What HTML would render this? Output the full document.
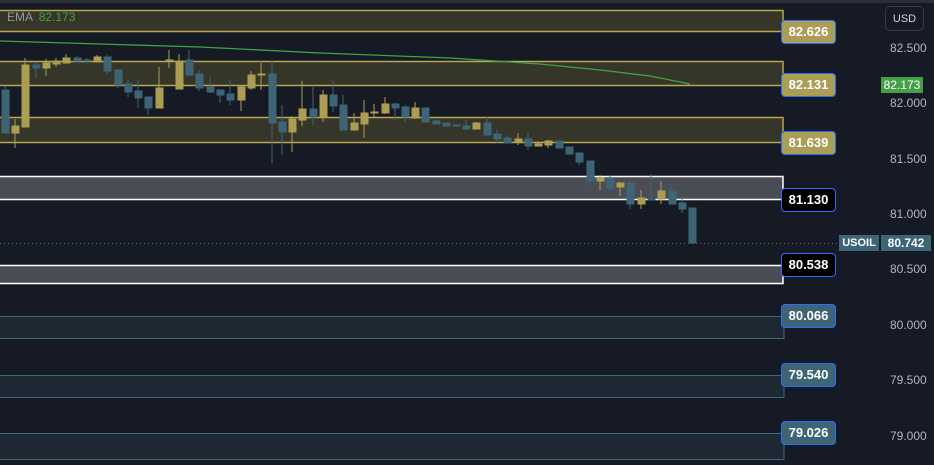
<!DOCTYPE html>
<html><head><style>
html,body{margin:0;padding:0;background:#161a25;width:934px;height:465px;overflow:hidden;font-family:"Liberation Sans",sans-serif}
.lb{position:absolute;left:781px;width:53px;height:22px;border:1.5px solid #2f6bff;border-radius:4px;color:#fff;font-size:13px;font-weight:bold;text-align:center;line-height:22px}
.ax{position:absolute;left:890px;color:#b2b5be;font-size:12px}
</style></head><body>
<div style="position:absolute;left:0;top:0;width:934px;height:3px;background:#2a2e39"></div>
<svg width="934" height="465" style="position:absolute;left:0;top:0">
<g fill="#353529" stroke="#b9a651" stroke-width="1.5">
<rect x="-2" y="10.5" width="785" height="21"/>
<rect x="-2" y="61.5" width="785" height="24"/>
<rect x="-2" y="117.5" width="785" height="25"/>
</g>
<g fill="#4a4d56" stroke="#fff" stroke-width="1.5">
<rect x="-2" y="176.5" width="785" height="23"/>
<rect x="-2" y="265.5" width="785" height="18"/>
</g>
<g fill="#1d2833" stroke="#3d6b7b" stroke-width="1">
<rect x="-2" y="316.5" width="786" height="22"/>
<rect x="-2" y="375.5" width="786" height="22"/>
<rect x="-2" y="433.5" width="786" height="26"/>
</g>
<polyline fill="none" stroke="#43a047" stroke-width="1.3" points="0,41 100,44 200,47 320,53 450,58 540,64 600,70 650,76 690,84"/>
<line x1="0" y1="243.5" x2="840" y2="243.5" stroke="#52707e" stroke-dasharray="1,3"/>
<g stroke-width="1">
<!-- x, wickTop, wickBot, bodyTop, bodyBot, color -->
<g stroke="#3e6576" fill="#3e6576">
<line x1="5" y1="86" x2="5" y2="133"/><rect x="2" y="90" width="7" height="43"/>
<line x1="36" y1="62" x2="36" y2="78"/><rect x="33" y="65" width="7" height="3"/>
<line x1="77" y1="56" x2="77" y2="62"/><rect x="74" y="58" width="7" height="3"/>
<line x1="87" y1="58" x2="87" y2="63"/><rect x="84" y="60" width="7" height="1"/>
<line x1="107" y1="55" x2="107" y2="74"/><rect x="104" y="57" width="7" height="14"/>
<line x1="118" y1="70" x2="118" y2="88"/><rect x="115" y="70" width="7" height="15"/>
<line x1="128" y1="79" x2="128" y2="97"/><rect x="125" y="84" width="7" height="8"/>
<line x1="138" y1="80" x2="138" y2="108"/><rect x="135" y="91" width="7" height="7"/>
<line x1="148" y1="97" x2="148" y2="115"/><rect x="145" y="97" width="7" height="11"/>
<line x1="189" y1="50" x2="189" y2="75"/><rect x="186" y="60" width="7" height="15"/>
<line x1="199" y1="70" x2="199" y2="91"/><rect x="196" y="74" width="7" height="14"/>
<line x1="210" y1="77" x2="210" y2="93"/><rect x="207" y="87" width="7" height="5"/>
<line x1="220" y1="89" x2="220" y2="103"/><rect x="217" y="90" width="7" height="5"/>
<line x1="230" y1="80" x2="230" y2="105"/><rect x="227" y="94" width="7" height="6"/>
<line x1="272" y1="61" x2="272" y2="163"/><rect x="269" y="74" width="7" height="49"/>
<line x1="282" y1="105" x2="282" y2="155"/><rect x="279" y="122" width="7" height="10"/>
<line x1="313" y1="87" x2="313" y2="125"/><rect x="310" y="109" width="7" height="8"/>
<line x1="333" y1="81" x2="333" y2="112"/><rect x="330" y="95" width="7" height="11"/>
<line x1="343" y1="95" x2="343" y2="130"/><rect x="340" y="105" width="7" height="25"/>
<line x1="395" y1="103" x2="395" y2="120"/><rect x="392" y="104" width="7" height="4"/>
<line x1="405" y1="105" x2="405" y2="122"/><rect x="402" y="107" width="7" height="10"/>
<rect x="422" y="108" width="7" height="14"/>
<rect x="433" y="121" width="7" height="3"/>
<rect x="443" y="123" width="7" height="3"/>
<line x1="456" y1="124" x2="456" y2="127"/><rect x="453" y="125" width="7" height="1"/>
<line x1="466" y1="120" x2="466" y2="130"/><rect x="463" y="126" width="7" height="3"/>
<line x1="487" y1="117" x2="487" y2="135"/><rect x="484" y="123" width="7" height="12"/>
<line x1="497" y1="130" x2="497" y2="143"/><rect x="494" y="134" width="7" height="5"/>
<line x1="507" y1="135" x2="507" y2="144"/><rect x="504" y="138" width="7" height="5"/>
<line x1="528" y1="133" x2="528" y2="150"/><rect x="525" y="139" width="7" height="7"/>
<rect x="556" y="141" width="7" height="7"/>
<rect x="566" y="147" width="7" height="7"/>
<line x1="579" y1="153" x2="579" y2="165"/><rect x="576" y="153" width="7" height="9"/>
<line x1="590" y1="161" x2="590" y2="185"/><rect x="587" y="161" width="7" height="20"/>
<line x1="610" y1="176" x2="610" y2="191"/><rect x="607" y="178" width="7" height="10"/>
<line x1="630" y1="182" x2="630" y2="209"/><rect x="627" y="183" width="7" height="21"/>
<line x1="651" y1="174" x2="651" y2="200"/><rect x="648" y="199" width="7" height="1"/>
<line x1="672" y1="187" x2="672" y2="204"/><rect x="669" y="191" width="7" height="13"/>
<line x1="682" y1="199" x2="682" y2="213"/><rect x="679" y="203" width="7" height="6"/>
<rect x="689" y="208" width="7" height="35"/>
</g>
<g stroke="#ab9d52" fill="#ab9d52">
<line x1="15" y1="119" x2="15" y2="148"/><rect x="12" y="126" width="7" height="7"/>
<line x1="25" y1="58" x2="25" y2="127"/><rect x="22" y="65" width="7" height="62"/>
<line x1="46" y1="59" x2="46" y2="76"/><rect x="43" y="63" width="7" height="5"/>
<line x1="56" y1="58" x2="56" y2="67"/><rect x="53" y="61" width="7" height="3"/>
<line x1="66" y1="54" x2="66" y2="63"/><rect x="63" y="58" width="7" height="5"/>
<line x1="97" y1="55" x2="97" y2="62"/><rect x="94" y="57" width="7" height="5"/>
<line x1="159" y1="67" x2="159" y2="108"/><rect x="156" y="88" width="7" height="20"/>
<line x1="169" y1="50" x2="169" y2="68"/><rect x="166" y="60" width="7" height="1"/>
<line x1="179" y1="54" x2="179" y2="89"/><rect x="176" y="61" width="7" height="28"/>
<line x1="241" y1="86" x2="241" y2="111"/><rect x="238" y="87" width="7" height="13"/>
<line x1="251" y1="71" x2="251" y2="90"/><rect x="248" y="75" width="7" height="13"/>
<line x1="261" y1="63" x2="261" y2="90"/><rect x="258" y="74" width="7" height="1"/>
<line x1="292" y1="116" x2="292" y2="152"/><rect x="289" y="119" width="7" height="13"/>
<line x1="302" y1="81" x2="302" y2="126"/><rect x="299" y="109" width="7" height="11"/>
<line x1="323" y1="90" x2="323" y2="122"/><rect x="320" y="95" width="7" height="22"/>
<line x1="354" y1="113" x2="354" y2="130"/><rect x="351" y="123" width="7" height="7"/>
<line x1="364" y1="100" x2="364" y2="138"/><rect x="361" y="113" width="7" height="11"/>
<line x1="374" y1="104" x2="374" y2="117"/><rect x="371" y="112" width="7" height="1"/>
<line x1="385" y1="97" x2="385" y2="114"/><rect x="382" y="104" width="7" height="9"/>
<line x1="415" y1="102" x2="415" y2="119"/><rect x="412" y="108" width="7" height="10"/>
<line x1="476" y1="122" x2="476" y2="129"/><rect x="473" y="123" width="7" height="6"/>
<line x1="518" y1="133" x2="518" y2="145"/><rect x="515" y="139" width="7" height="3"/>
<line x1="538" y1="141" x2="538" y2="146"/><rect x="535" y="144" width="7" height="2"/>
<line x1="548" y1="140" x2="548" y2="148"/><rect x="545" y="141" width="7" height="4"/>
<line x1="600" y1="175" x2="600" y2="190"/><rect x="597" y="178" width="7" height="3"/>
<line x1="620" y1="182" x2="620" y2="196"/><rect x="617" y="183" width="7" height="4"/>
<line x1="641" y1="190" x2="641" y2="209"/><rect x="638" y="198" width="7" height="6"/>
<line x1="661" y1="181" x2="661" y2="204"/><rect x="658" y="191" width="7" height="8"/>
</g>
</g>
</svg>
<div style="position:absolute;left:7px;top:10px;font-size:12px;color:#9598a1">EMA <span style="color:#43a047;margin-left:3px">82.173</span></div>

<div class="lb" style="top:20px;background:#aa9d55">82.626</div>
<div class="lb" style="top:73px;background:#aa9d55">82.131</div>
<div class="lb" style="top:131px;background:#aa9d55">81.639</div>
<div class="lb" style="top:188px;background:#000">81.130</div>
<div class="lb" style="top:253px;background:#000">80.538</div>
<div class="lb" style="top:304px;background:#3e6576">80.066</div>
<div class="lb" style="top:363px;background:#3e6576">79.540</div>
<div class="lb" style="top:421px;background:#3e6576">79.026</div>

<div style="position:absolute;left:885px;top:6px;width:39px;height:25px;border:1px solid #363a45;border-radius:5px;box-sizing:border-box;color:#d1d4dc;font-size:11px;text-align:center;line-height:24px">USD</div>
<div class="ax" style="top:41px">82.500</div>
<div style="position:absolute;left:881px;top:77px;width:42px;height:16px;background:#43a047;color:#fff;font-size:12px;text-align:center;line-height:16px">82.173</div>
<div class="ax" style="top:96px">82.000</div>
<div class="ax" style="top:152px">81.500</div>
<div class="ax" style="top:207px">81.000</div>
<div style="position:absolute;left:839px;top:235px;width:40px;height:16px;background:#3e6576;color:#fff;font-size:11px;font-weight:bold;text-align:center;line-height:16px">USOIL</div>
<div style="position:absolute;left:881px;top:235px;width:50px;height:16px;background:#3e6576;color:#fff;font-size:12px;font-weight:bold;text-align:center;line-height:16px">80.742</div>
<div class="ax" style="top:262px">80.500</div>
<div class="ax" style="top:318px">80.000</div>
<div class="ax" style="top:373px">79.500</div>
<div class="ax" style="top:429px">79.000</div>
</body></html>
